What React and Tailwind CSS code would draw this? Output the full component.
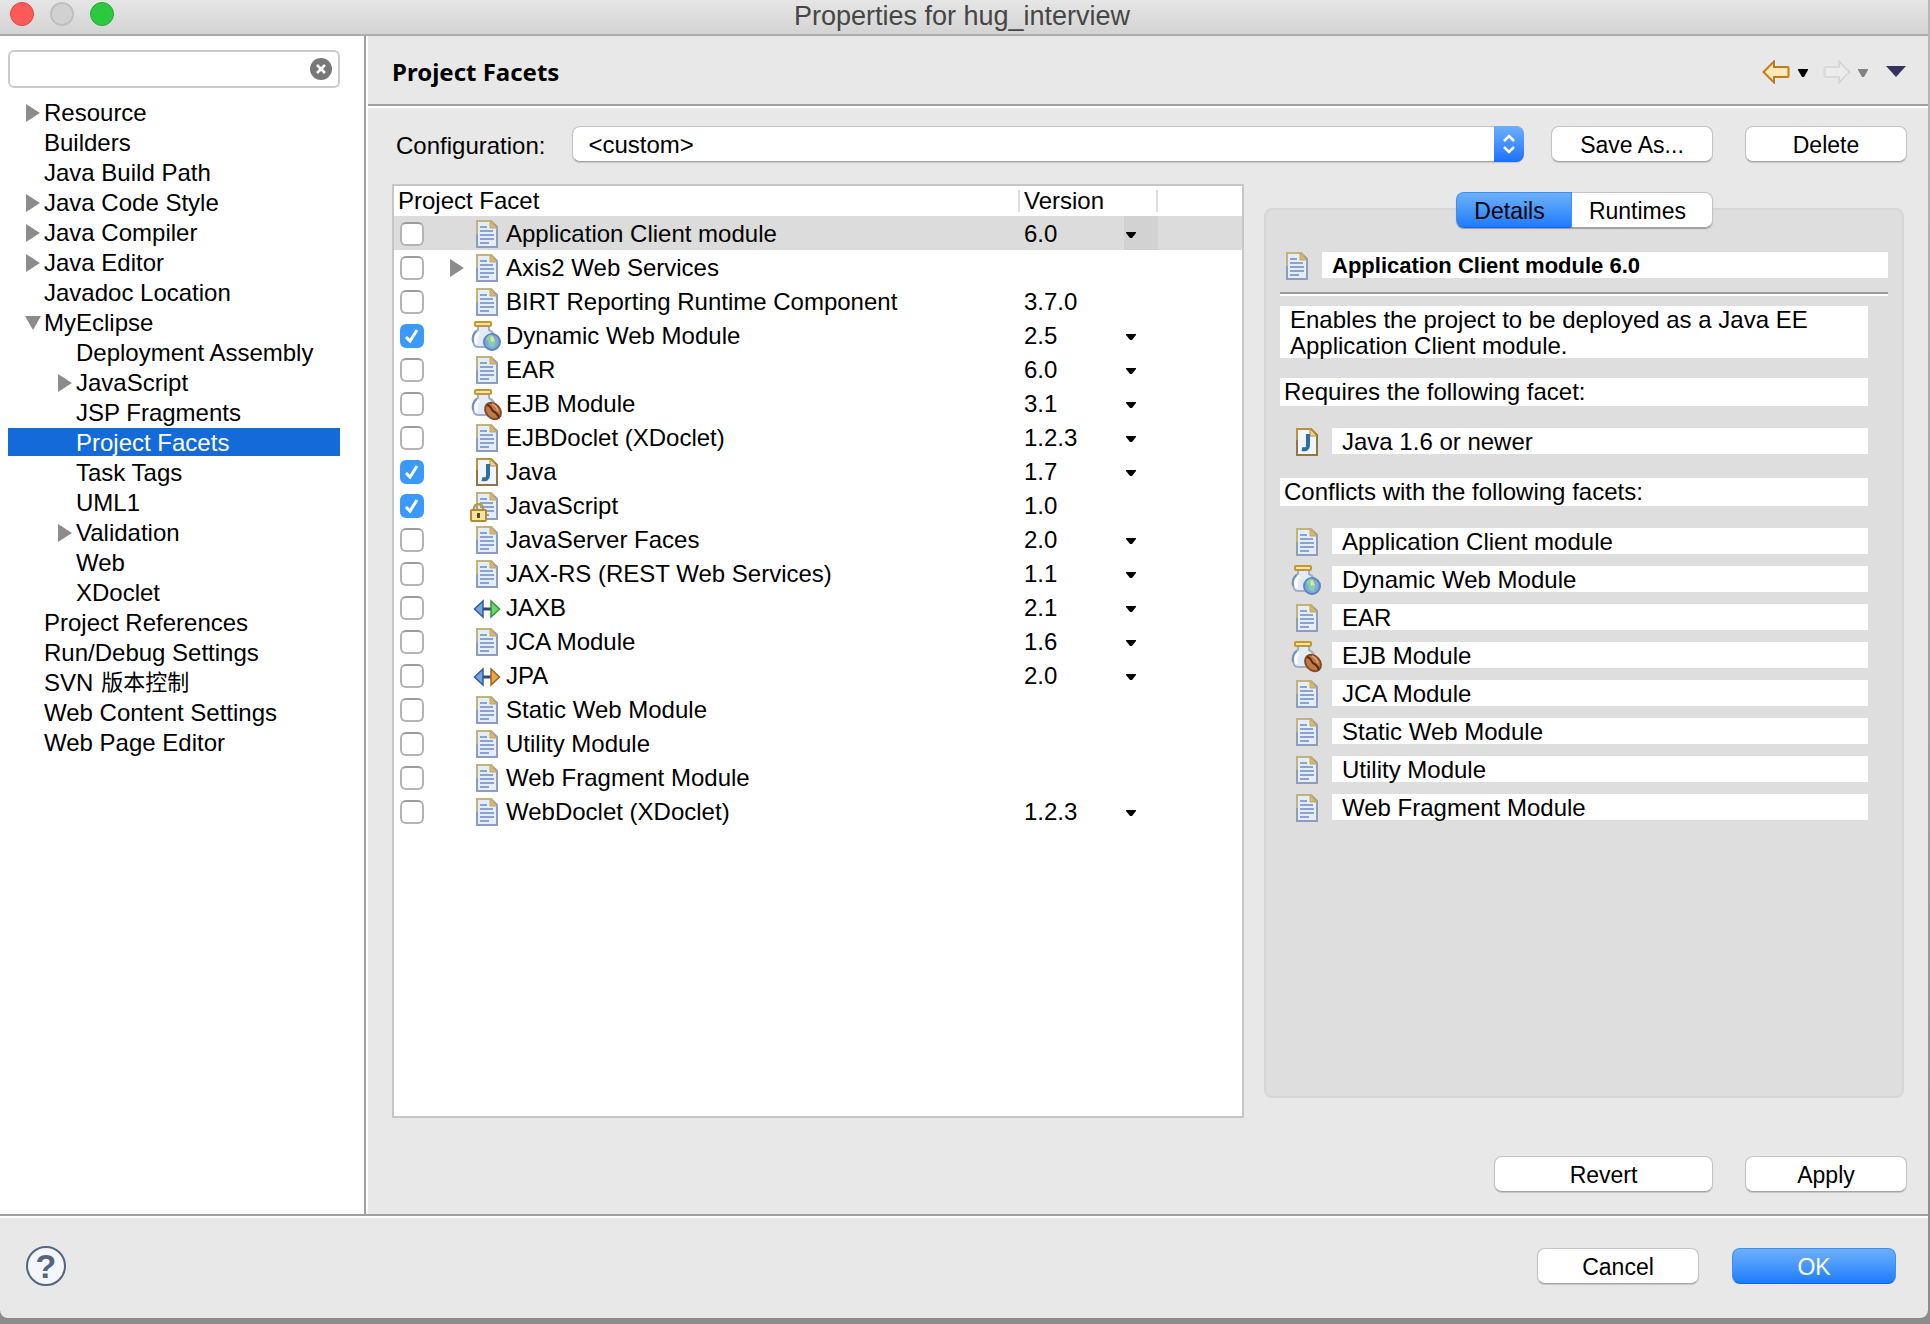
import { useState } from "react";

const TREE = [
  { label: "Resource", arrow: "right" },
  { label: "Builders" },
  { label: "Java Build Path" },
  { label: "Java Code Style", arrow: "right" },
  { label: "Java Compiler", arrow: "right" },
  { label: "Java Editor", arrow: "right" },
  { label: "Javadoc Location" },
  { label: "MyEclipse", arrow: "down" },
  { label: "Deployment Assembly", child: true },
  { label: "JavaScript", arrow: "right", child: true },
  { label: "JSP Fragments", child: true },
  { label: "Project Facets", child: true },
  { label: "Task Tags", child: true },
  { label: "UML1", child: true },
  { label: "Validation", arrow: "right", child: true },
  { label: "Web", child: true },
  { label: "XDoclet", child: true },
  { label: "Project References" },
  { label: "Run/Debug Settings" },
  { label: "SVN", cjk: "版本控制" },
  { label: "Web Content Settings" },
  { label: "Web Page Editor" },
];

const FACETS = [
  { name: "Application Client module", version: "6.0", menu: true, selected: true },
  { name: "Axis2 Web Services", expandable: true },
  { name: "BIRT Reporting Runtime Component", version: "3.7.0" },
  { name: "Dynamic Web Module", version: "2.5", menu: true, icon: "web", checked: true },
  { name: "EAR", version: "6.0", menu: true },
  { name: "EJB Module", version: "3.1", menu: true, icon: "ejb" },
  { name: "EJBDoclet (XDoclet)", version: "1.2.3", menu: true },
  { name: "Java", version: "1.7", menu: true, icon: "java", checked: true },
  { name: "JavaScript", version: "1.0", icon: "locked", checked: true },
  { name: "JavaServer Faces", version: "2.0", menu: true },
  { name: "JAX-RS (REST Web Services)", version: "1.1", menu: true },
  { name: "JAXB", version: "2.1", menu: true, icon: "jaxb" },
  { name: "JCA Module", version: "1.6", menu: true },
  { name: "JPA", version: "2.0", menu: true, icon: "jpa" },
  { name: "Static Web Module" },
  { name: "Utility Module" },
  { name: "Web Fragment Module" },
  { name: "WebDoclet (XDoclet)", version: "1.2.3", menu: true },
];

const CONFLICTS = [
  { name: "Application Client module" },
  { name: "Dynamic Web Module", icon: "web" },
  { name: "EAR" },
  { name: "EJB Module", icon: "ejb" },
  { name: "JCA Module" },
  { name: "Static Web Module" },
  { name: "Utility Module" },
  { name: "Web Fragment Module" },
];

function DocShape() {
  return (
    <>
      <path d="M7 3h14l6 6v20H7z" fill="#e4eefb" stroke="#8c9dbd" strokeWidth="2" />
      <path d="M7 16V3h14l3 3" fill="none" stroke="#c3b27c" strokeWidth="2" />
      <path d="M20 3v7h7z" fill="#d9b967" stroke="#c3a662" strokeWidth="1" />
      <path d="M10 9h7M10 13h13M10 17h14M10 21h14M10 25h9" stroke="#8ba1d0" strokeWidth="2" />
    </>
  );
}

function JarShape() {
  return (
    <>
      <path
        d="M8 6v4c-4 2-5 5-5 9 0 5 2 8 5 8h13c3 0 4-3 4-8 0-4-2-7-6-9V6z"
        fill="#e3ecf6"
        stroke="#9db0c8"
        strokeWidth="2"
      />
      <path d="M3 22c-1-4 0-9 4-11" fill="none" stroke="#6f93bd" strokeWidth="2" />
      <path d="M9 12c-3 3-4 8-2 12" fill="none" stroke="#fff" strokeWidth="3" />
      <rect x="5" y="2" width="16" height="4" rx="1" fill="#fbe7a8" stroke="#c6962c" strokeWidth="2" />
    </>
  );
}

function FacetIcon({ kind = "doc" }) {
  return (
    <svg viewBox="0 0 32 32" className="size-8 shrink-0 overflow-visible" aria-hidden="true">
      {kind === "doc" && <DocShape />}
      {kind === "locked" && (
        <>
          <DocShape />
          <path d="M4 21v-3c0-5 9-5 9 0v3" fill="none" stroke="#b99844" strokeWidth="2.500" />
          <rect x="1" y="20" width="15" height="11" rx="1" fill="#f7e2a0" stroke="#b38a2e" strokeWidth="2" />
          <rect x="7" y="23" width="3" height="5" fill="#5d4716" />
        </>
      )}
      {kind === "java" && (
        <>
          <path d="M7 3h14l6 6v20H7z" fill="#eef5fc" stroke="#8f7740" strokeWidth="2" />
          <path d="M7 14V3h14l4 4" fill="none" stroke="#b8923e" strokeWidth="2" />
          <path d="M20 3v7h7z" fill="#f0d08b" stroke="#b8923e" strokeWidth="1" />
          <path d="M18 8v11c0 4-2 5-6 4" fill="none" stroke="#2f6ea5" strokeWidth="4" />
        </>
      )}
      {kind === "web" && (
        <>
          <JarShape />
          <circle cx="22" cy="22" r="8" fill="#7fa9d8" stroke="#5b86bf" strokeWidth="2" />
          <path d="M16 19c1-4 5-5 7-4l-1 4 4 3-3 6-4-3-1-4z" fill="#86cdb4" />
          <path d="M20 17l3-1 2 5-4 1z" fill="#d9e88c" />
        </>
      )}
      {kind === "ejb" && (
        <>
          <JarShape />
          <ellipse cx="23" cy="23" rx="7" ry="9" transform="rotate(-42 23 23)" fill="#bf7a4a" stroke="#874a24" strokeWidth="2" />
          <path d="M17 17c5 1 4 5 6 6s5 3 6 7" fill="none" stroke="#5f2b0f" strokeWidth="2" />
          <path d="M22 16c3 1 5 4 6 7" fill="none" stroke="#e0a377" strokeWidth="1.500" />
        </>
      )}
      {(kind === "jaxb" || kind === "jpa") && (
        <>
          <path d="M12 17h10" stroke="#2c4a6e" strokeWidth="3" />
          <path d="M13 9v16L4.500 17z" fill="#74a5e0" stroke="#2f5c9c" strokeWidth="1.500" />
          {kind === "jaxb" ? (
            <path d="M21 9v16l8.500-8z" fill="#6fd768" stroke="#2f9440" strokeWidth="1.500" />
          ) : (
            <path d="M21 9v16l8.500-8z" fill="#eaa54c" stroke="#9c6420" strokeWidth="1.500" />
          )}
        </>
      )}
    </svg>
  );
}

function Disclosure({ open }) {
  return (
    <svg viewBox="0 0 18 18" className="size-[18px] shrink-0" fill="#8c8c8c" aria-hidden="true">
      {open ? <path d="M1 2h16L9 16z" /> : <path d="M2 0v18l14-9z" />}
    </svg>
  );
}

function SmallArrow({ className }) {
  return (
    <svg viewBox="0 0 10 6" className={className} fill="currentColor" aria-hidden="true">
      <path d="M0 0h10v1L6 6H4L0 1z" />
    </svg>
  );
}

const BUTTON =
  "h-9 rounded-lg border border-[#c4c4c4] border-b-[#a4a4a4] bg-white pt-px text-center text-[23px] leading-[26px] shadow-[0_1px_1px_rgba(0,0,0,0.15)]";

function Sidebar() {
  const [current, setCurrent] = useState("Project Facets");
  return (
    <aside className="w-[366px] shrink-0 border-r-2 border-[#a0a0a0] bg-white pt-[14px] pl-2">
      <div className="relative w-[332px]">
        <input
          type="text"
          aria-label="Filter"
          className="block h-[38px] w-full rounded-md border-2 border-[#cbcbcb] bg-white pr-10 pl-2 outline-none"
        />
        <button type="button" aria-label="Clear filter" className="absolute top-2 right-2 size-[22px]">
          <svg viewBox="0 0 22 22" aria-hidden="true">
            <circle cx="11" cy="11" r="11" fill="#787878" />
            <path d="M7 7l8 8M15 7l-8 8" stroke="#fff" strokeWidth="2.500" />
          </svg>
        </button>
      </div>
      <ul role="tree" aria-label="Property pages" className="mt-[9px] w-[332px]">
        {TREE.map((item) => (
          <li key={item.label} role="treeitem" aria-selected={item.label === current} className="h-[30px] py-px">
            <button
              type="button"
              onClick={() => setCurrent(item.label)}
              className={`flex h-7 w-full items-center pt-px text-left leading-7 whitespace-nowrap ${
                item.child ? "pl-12" : "pl-4"
              } ${item.label === current ? "bg-[#136ad8] text-white" : ""}`}
            >
              <span className="flex w-5 shrink-0">
                {item.arrow && <Disclosure open={item.arrow === "down"} />}
              </span>
              {item.label}
              {item.cjk && <span className="ml-2 text-[22px]">{item.cjk}</span>}
            </button>
          </li>
        ))}
      </ul>
    </aside>
  );
}

function FacetTable() {
  return (
    <div className="min-w-0 border-2 border-[#c6c6c6] bg-white">
      <table className="w-full table-fixed border-collapse text-left">
        <colgroup>
          <col className="w-[626px]" />
          <col className="w-[138px]" />
          <col />
        </colgroup>
        <thead>
          <tr className="h-[30px]">
            <th scope="col" className="p-0 font-normal">
              <div className="h-[22px] border-r-2 border-[#dedede] pl-1 leading-[22px]">Project Facet</div>
            </th>
            <th scope="col" className="p-0 font-normal">
              <div className="h-[22px] border-r-2 border-[#dedede] pl-1 leading-[22px]">Version</div>
            </th>
            <td />
          </tr>
        </thead>
        <tbody>
          {FACETS.map((f) => (
            <tr key={f.name} className={`h-[34px] ${f.selected ? "bg-[#dcdcdc]" : ""}`}>
              <td className="p-0">
                <label className="flex h-[34px] items-center pt-[2px] pl-[6px]">
                  <span className="relative size-6 shrink-0">
                    <input
                      type="checkbox"
                      defaultChecked={f.checked}
                      className="peer block size-6 appearance-none rounded-md border-2 border-[#b4b4b4] border-t-[#9c9c9c] bg-white checked:border-[#3b99fc] checked:bg-[#3b99fc]"
                    />
                    <svg
                      viewBox="0 0 24 24"
                      className="pointer-events-none absolute inset-0 hidden size-6 peer-checked:block"
                      aria-hidden="true"
                    >
                      <path d="M6 13l4 4 7-11" fill="none" stroke="#fff" strokeWidth="3" />
                    </svg>
                  </span>
                  <span className="ml-6 flex w-[22px] shrink-0">{f.expandable && <Disclosure />}</span>
                  <FacetIcon kind={f.icon} />
                  <span className="ml-1 whitespace-nowrap">{f.name}</span>
                </label>
              </td>
              <td className="p-0">
                <div className="flex h-[34px] items-center justify-between pl-1">
                  <span className="pt-[2px]">{f.version}</span>
                  {f.menu && (
                    <button
                      type="button"
                      aria-label={`Choose version of ${f.name}`}
                      className={`flex h-[34px] w-[34px] items-center pt-[3px] pl-[2px] ${f.selected ? "bg-[#d2d2d2]" : ""}`}
                    >
                      <SmallArrow className="h-[6px] w-[10px]" />
                    </button>
                  )}
                </div>
              </td>
              <td />
            </tr>
          ))}
        </tbody>
      </table>
    </div>
  );
}

function FacetLine({ name, icon }) {
  return (
    <li className="flex h-[26px]">
      <span className="-mt-[2px]">
        <FacetIcon kind={icon} />
      </span>
      <span className="ml-[10px] h-[26px] flex-1 bg-white pl-[10px] leading-[28px]">{name}</span>
    </li>
  );
}

function DetailsPanel() {
  return (
    <section className="flex min-w-0 flex-col pt-2 pb-5">
      <div className="relative mt-4 flex-1 rounded-lg border-2 border-[#d6d6d6] bg-[#dedede] px-[14px] pt-[42px]">
        <div className="absolute inset-x-0 -top-[18px] flex justify-center">
          <div role="tablist" className="flex h-9 rounded-lg shadow-[0_1px_1px_rgba(0,0,0,0.3)]">
            <button
              type="button"
              role="tab"
              aria-selected="true"
              className="w-[116px] rounded-l-lg border border-[#3f8df0] border-b-[#1a63e0] bg-linear-to-b from-[#6cb0fa] to-[#1a7bfd] pt-px pr-2 text-[23px] leading-[26px]"
            >
              Details
            </button>
            <button
              type="button"
              role="tab"
              aria-selected="false"
              className="w-[141px] rounded-r-lg border border-l-0 border-[#c4c4c4] border-b-[#a4a4a4] bg-white pt-px pr-2 text-[23px] leading-[26px]"
            >
              Runtimes
            </button>
          </div>
        </div>
        <div className="flex h-[26px]">
          <span className="-mt-[2px]">
            <FacetIcon />
          </span>
          <h2 className="ml-[10px] h-[26px] flex-1 bg-white pl-[10px] text-[22px] leading-[28px] font-bold">
            Application Client module 6.0
          </h2>
        </div>
        <hr className="mt-[14px] h-1 border-t-2 border-b-2 border-t-[#9c9c9c] border-b-white" />
        <div className="pr-5">
          <p className="mt-[10px] h-[52px] bg-white pt-px pl-[10px] leading-[26px]">
            Enables the project to be deployed as a Java EE Application Client module.
          </p>
          <h3 className="mt-5 h-7 bg-white pl-1 leading-7">Requires the following facet:</h3>
          <ul className="mt-[22px] pl-[10px]">
            <FacetLine name="Java 1.6 or newer" icon="java" />
          </ul>
          <h3 className="mt-6 h-7 bg-white pl-1 leading-7">Conflicts with the following facets:</h3>
          <ul className="mt-[22px] flex flex-col gap-3 pl-[10px]">
            {CONFLICTS.map((c) => (
              <FacetLine key={c.name} {...c} />
            ))}
          </ul>
        </div>
      </div>
    </section>
  );
}

function HistoryToolbar() {
  return (
    <div className="flex items-center">
      <button type="button" aria-label="Back">
        <svg viewBox="0 0 28 24" className="h-6 w-7" aria-hidden="true">
          <path d="M1.500 12L12 1.500V7h13.500q1 0 1 1v8q0 1-1 1H12v5.500z" fill="#fde9b4" stroke="#bd7a1f" strokeWidth="2" />
        </svg>
      </button>
      <button type="button" aria-label="Back history" className="mt-[2px] ml-2">
        <svg viewBox="0 0 10 8" className="h-2 w-[10px]" fill="currentColor" aria-hidden="true">
          <path d="M0 0h10v1L6 8H4L0 1z" />
        </svg>
      </button>
      <button type="button" aria-label="Forward" className="ml-[15px]">
        <svg viewBox="0 0 28 24" className="h-6 w-7" aria-hidden="true">
          <path d="M26.500 12L16 1.500V7H2.500q-1 0-1 1v8q0 1 1 1H16v5.500z" fill="#ececec" stroke="#d8d8d8" strokeWidth="2" />
        </svg>
      </button>
      <button type="button" aria-label="Forward history" className="mt-[2px] ml-[7px] text-[#828282]">
        <svg viewBox="0 0 10 8" className="h-2 w-[10px]" fill="currentColor" aria-hidden="true">
          <path d="M0 0h10v1L6 8H4L0 1z" />
        </svg>
      </button>
      <button type="button" aria-label="View menu" className="ml-[18px]">
        <svg viewBox="0 0 20 11" className="h-[11px] w-5" aria-hidden="true">
          <path d="M0 0h20L10 11z" fill="#38325f" />
        </svg>
      </button>
    </div>
  );
}

export default function App() {
  return (
    <div className="flex min-h-screen flex-col bg-linear-to-b from-[#b8b8b8] to-[#8c8c8c] pr-[2px] pb-[6px] font-['Liberation_Sans','Noto_Sans_CJK_SC',sans-serif] text-[24px] leading-[28px] text-black">
      <div className="flex flex-1 flex-col overflow-hidden rounded-b-lg bg-[#e8e8e8]">
        <header className="relative flex h-9 shrink-0 items-center justify-center border-b-2 border-[#ababab] bg-linear-to-b from-[#e6e6e6] to-[#d3d3d3]">
          <div className="absolute top-[2px] left-[10px] flex gap-4">
            <button type="button" aria-label="Close" className="size-6 rounded-full border border-[#e2463f] bg-[#fc5b57]" />
            <button type="button" aria-label="Minimize" className="size-6 rounded-full border-2 border-[#bfbfbf] bg-[#d1d1d1]" />
            <button type="button" aria-label="Zoom" className="size-6 rounded-full border border-[#1fad32] bg-[#2cc840]" />
          </div>
          <h1 className="pr-1 pb-[2px] text-[27px] leading-[28px] text-[#464646]">Properties for hug_interview</h1>
        </header>

        <div className="flex flex-1">
          <Sidebar />
          <main className="flex min-w-0 flex-1 flex-col border-l-2 border-white">
            <div className="flex h-[70px] items-center justify-between border-b-2 border-[#a0a0a0] pt-[3px] pr-[22px] pl-6">
              <h2 className="font-['Noto_Sans',sans-serif] text-[24px] leading-[30px] font-bold">Project Facets</h2>
              <HistoryToolbar />
            </div>
            <div className="h-[2px] bg-white" />

            <div className="flex items-center pt-[18px] pr-[21px] pl-7">
              <label htmlFor="configuration" className="pt-[3px]">Configuration:</label>
              <div className="relative ml-[27px] flex-1">
                <select
                  id="configuration"
                  className="block h-9 w-full appearance-none rounded-lg border border-[#c4c4c4] border-b-[#a4a4a4] bg-white pt-px pr-9 pl-[15px] leading-[26px] shadow-[0_1px_1px_rgba(0,0,0,0.15)]"
                >
                  <option>&lt;custom&gt;</option>
                </select>
                <span className="pointer-events-none absolute inset-y-0 right-0 flex w-[30px] items-center justify-center rounded-r-lg bg-linear-to-b from-[#6cb0fa] to-[#1a6ffd]">
                  <svg viewBox="0 0 14 20" className="h-5 w-[14px]" fill="none" stroke="#fff" strokeWidth="2.500" aria-hidden="true">
                    <path d="M2 7l5-5 5 5M2 13l5 5 5-5" />
                  </svg>
                </span>
              </div>
              <button type="button" className={`${BUTTON} ml-[27px] w-[162px]`}>Save As...</button>
              <button type="button" className={`${BUTTON} ml-8 w-[162px]`}>Delete</button>
            </div>

            <div className="mt-[22px] grid flex-1 grid-cols-[852fr_640fr] gap-5 px-6">
              <FacetTable />
              <DetailsPanel />
            </div>

            <div className="flex justify-end gap-8 pt-[38px] pr-[21px] pb-[22px]">
              <button type="button" className={`${BUTTON} w-[219px]`}>Revert</button>
              <button type="button" className={`${BUTTON} w-[162px]`}>Apply</button>
            </div>
          </main>
        </div>

        <footer className="border-t-2 border-[#a0a0a0]">
          <div className="flex h-[102px] items-center border-t-2 border-white pr-8 pb-1 pl-[26px]">
            <button
              type="button"
              aria-label="Help"
              className="mr-auto flex size-10 items-center justify-center rounded-full border-2 border-[#56657f] bg-[#f3f6fa] text-[34px] leading-[36px] font-bold text-[#56657f]"
            >
              ?
            </button>
            <button type="button" className={`${BUTTON} w-[162px]`}>Cancel</button>
            <button
              type="button"
              className="ml-[33px] h-9 w-[164px] rounded-lg border border-[#3f8df0] border-b-[#1a63e0] bg-linear-to-b from-[#6cb0fa] to-[#1a7bfd] pt-px text-center text-[23px] leading-[26px] text-white"
            >
              OK
            </button>
          </div>
        </footer>
      </div>
    </div>
  );
}
